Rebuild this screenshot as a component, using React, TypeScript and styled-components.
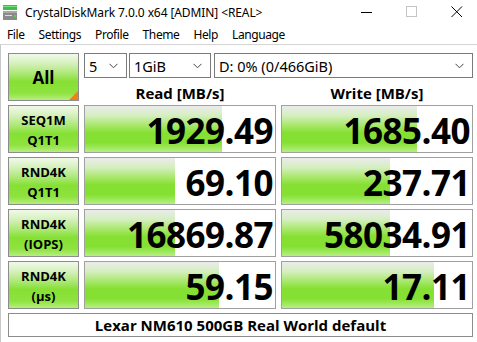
import React from 'react';
import styled, { createGlobalStyle } from 'styled-components';

type Result = {
  line1: string;
  line2: string;
  read: string;
  readBar: number;
  write: string;
  writeBar: number;
};

const results: Result[] = [
  { line1: 'SEQ1M', line2: 'Q1T1', read: '1929.49', readBar: 137, write: '1685.40', writeBar: 135 },
  { line1: 'RND4K', line2: 'Q1T1', read: '69.10', readBar: 90, write: '237.71', writeBar: 108 },
  { line1: 'RND4K', line2: '(IOPS)', read: '16869.87', readBar: 90, write: '58034.91', writeBar: 108 },
  { line1: 'RND4K', line2: '(µs)', read: '59.15', readBar: 134, write: '17.11', writeBar: 152 },
];

const menus = ['File', 'Settings', 'Profile', 'Theme', 'Help', 'Language'];

const GlobalStyle = createGlobalStyle`
  html, body {
    margin: 0;
    padding: 0;
    background: #ffffff;
  }
  body {
    font-family: 'Open Sans', 'Noto Sans', 'Liberation Sans', sans-serif;
    color: #000;
  }
`;

const DriveIcon = () => (
  <svg width="16" height="17" viewBox="0 0 16 17">
    <rect x="1" y="1" width="14" height="5" fill="#3fbf4a" />
    <rect x="1" y="2" width="14" height="1" fill="#7adf7f" />
    <rect x="1" y="7" width="14" height="9" fill="#8a8a8a" />
    <rect x="1" y="7" width="14" height="2" fill="#a9a9a9" />
    <rect x="3" y="11" width="7" height="1" fill="#dcdcdc" />
    <rect x="12" y="11" width="2" height="2" fill="#4fd35a" />
  </svg>
);

const Chevron = () => (
  <svg width="9" height="6" viewBox="0 0 9 6">
    <path d="M0.5 0.8 L4.5 4.8 L8.5 0.8" fill="none" stroke="#444" strokeWidth="1" />
  </svg>
);

const App = () => {
  return (
    <Window>
      <GlobalStyle />
      <TitleBar>
        <TitleLeft>
          <DriveIcon />
          <TitleText>CrystalDiskMark 7.0.0 x64 [ADMIN] &lt;REAL&gt;</TitleText>
        </TitleLeft>
        <Controls>
          <Ctrl>
            <svg width="12" height="12" viewBox="0 0 12 12">
              <path d="M0 6.5 H11" stroke="#000" strokeWidth="1" />
            </svg>
          </Ctrl>
          <Ctrl>
            <svg width="12" height="12" viewBox="0 0 12 12">
              <rect x="0.5" y="0.5" width="10" height="10" fill="none" stroke="#c4c4c4" />
            </svg>
          </Ctrl>
          <Ctrl>
            <svg width="12" height="12" viewBox="0 0 12 12">
              <path d="M0.5 0.5 L11 11 M11 0.5 L0.5 11" stroke="#000" strokeWidth="1" />
            </svg>
          </Ctrl>
        </Controls>
      </TitleBar>
      <MenuBar>
        {menus.map(m => (
          <MenuItem key={m}>{m}</MenuItem>
        ))}
      </MenuBar>
      <Body>
        <Grid>
          <AllButton>
            All
            <Corner />
          </AllButton>
          <TopRight>
            <Combos>
              <Combo $width="43px">
                <span>5</span>
                <Chevron />
              </Combo>
              <Combo $width="82px">
                <span>1GiB</span>
                <Chevron />
              </Combo>
              <Combo $grow>
                <span>D: 0% (0/466GiB)</span>
                <Chevron />
              </Combo>
            </Combos>
            <Headers>
              <Header>Read [MB/s]</Header>
              <Header>Write [MB/s]</Header>
            </Headers>
          </TopRight>
          {results.map(r => (
            <React.Fragment key={r.line1 + r.line2}>
              <TestButton>
                <span>{r.line1}</span>
                <span>{r.line2}</span>
              </TestButton>
              <Meter style={{ backgroundSize: `${r.readBar}px 100%` }}>{r.read}</Meter>
              <Meter style={{ backgroundSize: `${r.writeBar}px 100%` }}>{r.write}</Meter>
            </React.Fragment>
          ))}
          <Comment>Lexar NM610 500GB Real World default</Comment>
        </Grid>
      </Body>
    </Window>
  );
};

export default App;

const Window = styled.div`
  width: 477px;
  height: 342px;
  background: #fff;
  overflow: hidden;
`;

const TitleBar = styled.div`
  height: 24px;
  display: flex;
  align-items: center;
  justify-content: space-between;
`;

const TitleLeft = styled.div`
  display: flex;
  align-items: center;
  padding-left: 2px;
  gap: 7px;
`;

const TitleText = styled.span`
  font-family: 'Noto Sans', 'Open Sans', sans-serif;
  font-size: 12px;
  color: #000;
  letter-spacing: -0.1px;
`;

const Controls = styled.div`
  display: flex;
  align-items: center;
  padding-right: 14px;
  gap: 33px;
`;

const Ctrl = styled.div`
  width: 12px;
  height: 12px;
  display: flex;
`;

const MenuBar = styled.div`
  height: 20px;
  display: flex;
  align-items: center;
  border-bottom: 1px solid #d4d4d4;
`;

const MenuItem = styled.span`
  font-family: 'Noto Sans', 'Open Sans', sans-serif;
  font-size: 12px;
  letter-spacing: -0.4px;
  padding: 0 7px;
  color: #000;
`;

const Body = styled.div`
  border-left: 1px solid #c8c8c8;
  padding: 8px 0 0 7px;
  height: 297px;
  box-sizing: border-box;
`;

const Grid = styled.div`
  display: grid;
  grid-template-columns: 71px 192px 192px;
  grid-template-rows: repeat(5, 48px) 24px;
  column-gap: 5px;
  row-gap: 4px;
`;

const greenButton = `
  border: 1px solid #8c8c8c;
  box-sizing: border-box;
  background: linear-gradient(
    to bottom,
    #f1f9ea 0%,
    #d3f0b8 22%,
    #a6e76c 45%,
    #86e033 60%,
    #8fe33f 85%,
    #b6ef80 100%
  );
`;

const AllButton = styled.div`
  ${greenButton}
  position: relative;
  display: flex;
  align-items: center;
  justify-content: center;
  font-weight: 700;
  font-size: 17px;
`;

const Corner = styled.span`
  position: absolute;
  right: 0;
  bottom: 0;
  width: 0;
  height: 0;
  border-style: solid;
  border-width: 0 0 9px 9px;
  border-color: transparent transparent #f57f17 transparent;
`;

const TopRight = styled.div`
  grid-column: 2 / 4;
  display: flex;
  flex-direction: column;
`;

const Combos = styled.div`
  display: flex;
  height: 25px;
  gap: 2px;
  & > *:last-child {
    margin-left: 1px;
  }
`;

const Combo = styled.div<{ $width?: string; $grow?: boolean }>`
  width: ${p => p.$width || 'auto'};
  flex: ${p => (p.$grow ? '1' : 'none')};
  box-sizing: border-box;
  border: 1px solid #7a7a7a;
  background: #fff;
  display: flex;
  align-items: center;
  justify-content: space-between;
  padding: 0 8px 0 4px;
  font-family: 'Noto Sans', 'Open Sans', sans-serif;
  font-size: 14.5px;
  color: #000;
`;

const Headers = styled.div`
  flex: 1;
  display: grid;
  grid-template-columns: 192px 192px;
  column-gap: 5px;
  align-items: end;
`;

const Header = styled.div`
  text-align: center;
  font-weight: 700;
  font-size: 15px;
  line-height: 15px;
`;

const TestButton = styled.div`
  ${greenButton}
  display: flex;
  flex-direction: column;
  align-items: center;
  justify-content: center;
  font-weight: 700;
  font-size: 13px;
  line-height: 20px;
  padding-top: 1px;
`;

const Meter = styled.div`
  border: 1px solid #a0a0a0;
  box-sizing: border-box;
  background-color: #fff;
  background-image: linear-gradient(
    to bottom,
    #ebebeb 0%,
    #d6efc2 20%,
    #ace873 40%,
    #86e033 58%,
    #85e034 80%,
    #b7f082 100%
  );
  background-repeat: no-repeat;
  display: flex;
  align-items: center;
  justify-content: flex-end;
  padding: 3px 2px 0 0;
  font-weight: 700;
  font-size: 35px;
  letter-spacing: -0.5px;
  line-height: 1;
`;

const Comment = styled.div`
  grid-column: 1 / 4;
  border: 1px solid #8c8c8c;
  box-sizing: border-box;
  display: flex;
  align-items: center;
  justify-content: center;
  font-weight: 700;
  font-size: 15px;
`;
